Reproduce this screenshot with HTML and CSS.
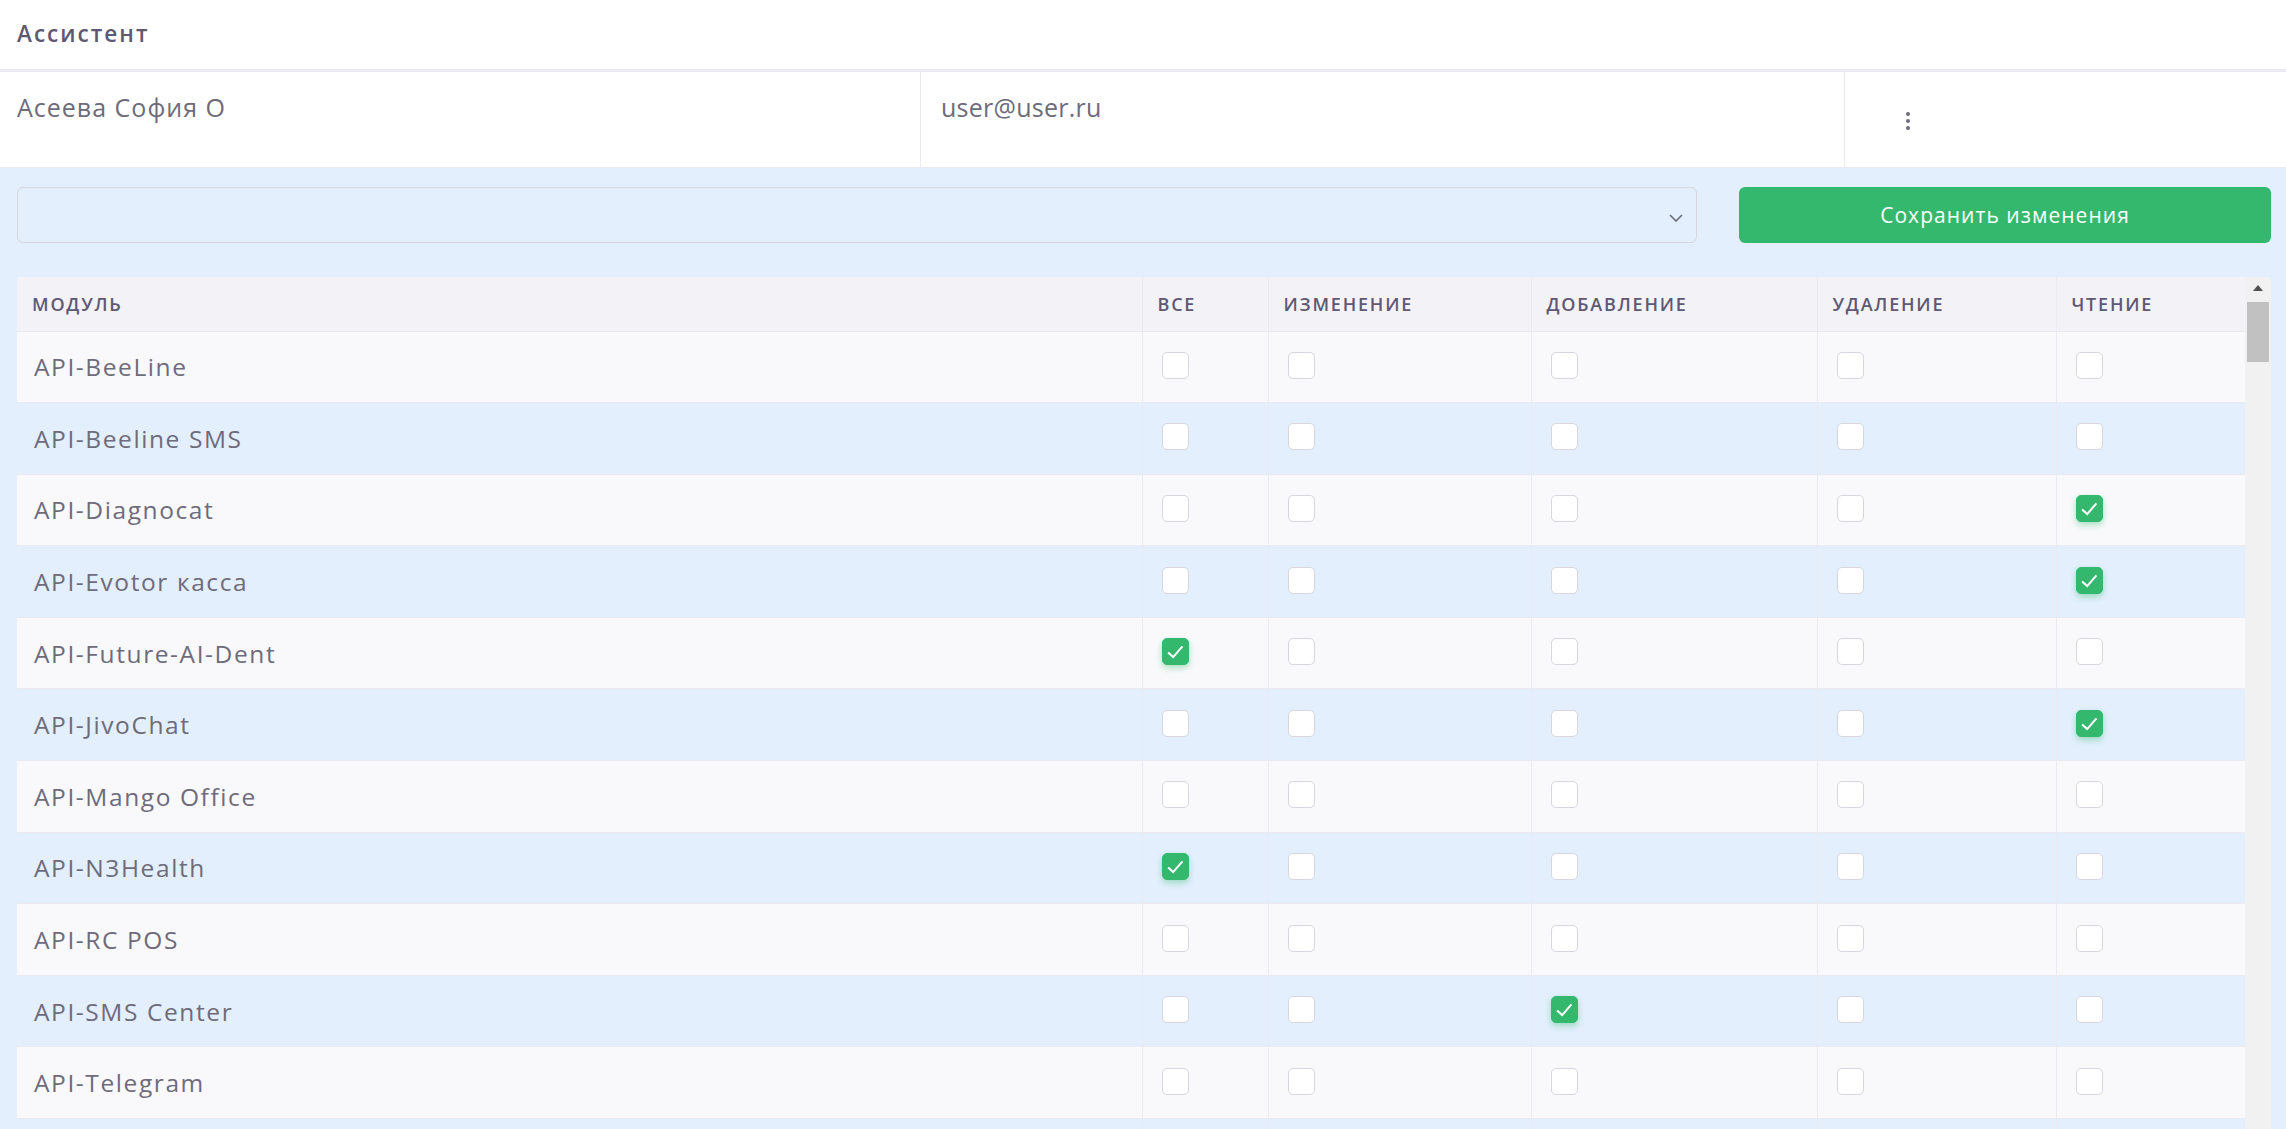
FILE: index.html
```html
<!DOCTYPE html>
<html lang="ru">
<head>
<meta charset="utf-8">
<title>Ассистент</title>
<link rel="stylesheet" href="styles.css">
</head>
<body>
<div class="title-bar"><h4 class="title">Ассистент</h4></div>
<div class="user-row">
  <div class="user-cell name-cell">Асеева София О</div>
  <div class="user-cell email-cell">user@user.ru</div>
  <div class="user-cell actions-cell">
    <svg class="kebab" width="4" height="18" viewBox="0 0 4 18"><circle cx="2" cy="2" r="2"/><circle cx="2" cy="9" r="2"/><circle cx="2" cy="16" r="2"/></svg>
  </div>
</div>
<div class="content">
  <div class="toolbar">
    <div class="select">
      <svg class="chevron" width="14" height="8" viewBox="0 0 14 8"><polyline points="1,1 7,7 13,1"/></svg>
    </div>
    <button class="btn-save">Сохранить изменения</button>
  </div>
  <div class="table-wrap">
    <div class="table-area">
      <table class="perm-table">
        <colgroup>
          <col class="c-module"><col class="c-all"><col class="c-edit"><col class="c-add"><col class="c-del"><col class="c-read">
        </colgroup>
        <thead>
          <tr><th>Модуль</th><th>Все</th><th>Изменение</th><th>Добавление</th><th>Удаление</th><th>Чтение</th></tr>
        </thead>
        <tbody>
          <tr><td class="module">API-BeeLine</td><td><span class="cb"></span></td><td><span class="cb"></span></td><td><span class="cb"></span></td><td><span class="cb"></span></td><td><span class="cb"></span></td></tr>
          <tr><td class="module">API-Beeline SMS</td><td><span class="cb"></span></td><td><span class="cb"></span></td><td><span class="cb"></span></td><td><span class="cb"></span></td><td><span class="cb"></span></td></tr>
          <tr><td class="module">API-Diagnocat</td><td><span class="cb"></span></td><td><span class="cb"></span></td><td><span class="cb"></span></td><td><span class="cb"></span></td><td><span class="cb checked"><svg viewBox="0 0 27 27"><path d="M5.5 14.5 L11 19.5 L21 8"/></svg></span></td></tr>
          <tr><td class="module">API-Evotor касса</td><td><span class="cb"></span></td><td><span class="cb"></span></td><td><span class="cb"></span></td><td><span class="cb"></span></td><td><span class="cb checked"><svg viewBox="0 0 27 27"><path d="M5.5 14.5 L11 19.5 L21 8"/></svg></span></td></tr>
          <tr><td class="module">API-Future-AI-Dent</td><td><span class="cb checked"><svg viewBox="0 0 27 27"><path d="M5.5 14.5 L11 19.5 L21 8"/></svg></span></td><td><span class="cb"></span></td><td><span class="cb"></span></td><td><span class="cb"></span></td><td><span class="cb"></span></td></tr>
          <tr><td class="module">API-JivoChat</td><td><span class="cb"></span></td><td><span class="cb"></span></td><td><span class="cb"></span></td><td><span class="cb"></span></td><td><span class="cb checked"><svg viewBox="0 0 27 27"><path d="M5.5 14.5 L11 19.5 L21 8"/></svg></span></td></tr>
          <tr><td class="module">API-Mango Office</td><td><span class="cb"></span></td><td><span class="cb"></span></td><td><span class="cb"></span></td><td><span class="cb"></span></td><td><span class="cb"></span></td></tr>
          <tr><td class="module">API-N3Health</td><td><span class="cb checked"><svg viewBox="0 0 27 27"><path d="M5.5 14.5 L11 19.5 L21 8"/></svg></span></td><td><span class="cb"></span></td><td><span class="cb"></span></td><td><span class="cb"></span></td><td><span class="cb"></span></td></tr>
          <tr><td class="module">API-RC POS</td><td><span class="cb"></span></td><td><span class="cb"></span></td><td><span class="cb"></span></td><td><span class="cb"></span></td><td><span class="cb"></span></td></tr>
          <tr><td class="module">API-SMS Center</td><td><span class="cb"></span></td><td><span class="cb"></span></td><td><span class="cb checked"><svg viewBox="0 0 27 27"><path d="M5.5 14.5 L11 19.5 L21 8"/></svg></span></td><td><span class="cb"></span></td><td><span class="cb"></span></td></tr>
          <tr><td class="module">API-Telegram</td><td><span class="cb"></span></td><td><span class="cb"></span></td><td><span class="cb"></span></td><td><span class="cb"></span></td><td><span class="cb"></span></td></tr>
          <tr class="row-peek"><td></td><td></td><td></td><td></td><td></td><td></td></tr>
        </tbody>
      </table>
    </div>
    <div class="scrollbar">
      <span class="sb-arrow"><svg width="10" height="6" viewBox="0 0 10 6"><polygon points="0,6 5,0 10,6"/></svg></span>
      <span class="sb-thumb"></span>
    </div>
  </div>
</div>
</body>
</html>
```
FILE: styles.css
```css
* { box-sizing: border-box; }

html, body {
  margin: 0;
  height: 100%;
}

body {
  background: #e3effd;
  font-family: "Open Sans", "Noto Sans", sans-serif;
  color: #6e6b7b;
  overflow: hidden;
  display: flex;
  flex-direction: column;
}

.title-bar {
  background: #fff;
  height: 72px;
  flex: none;
  border-bottom: 3px solid #ebe9f1;
  padding: 0 17px;
  display: flex;
  align-items: center;
}

.title {
  margin: 0;
  font-size: 22.5px;
  font-weight: 600;
  color: #5e5873;
  letter-spacing: 0.09em;
  line-height: 1;
}

.user-row {
  flex: none;
  display: grid;
  grid-template-columns: 921px 924px 1fr;
  height: 96px;
  background: #fff;
  border-bottom: 1px solid #ebe9f1;
}

.user-cell {
  padding: 18px 18px 0;
  font-size: 25px;
  line-height: 34px;
  letter-spacing: 0.04em;
  border-right: 1px solid #ebe9f1;
}

.name-cell { padding-left: 17px; }
.email-cell { padding-left: 20px; letter-spacing: 0.01em; }

.actions-cell {
  border-right: 0;
  display: flex;
  align-items: center;
  padding: 3px 0 0 61px;
}

.kebab { fill: #6e6b7b; }

.content {
  flex: 1;
  min-height: 0;
  display: flex;
  flex-direction: column;
  padding: 19px 15px 0 17px;
}

.toolbar {
  display: flex;
  gap: 42px;
  height: 56px;
  flex: none;
}

.select {
  flex: 1;
  border: 1px solid #d8d6de;
  border-radius: 6px;
  display: flex;
  align-items: center;
  justify-content: flex-end;
  padding: 5px 13px 0 0;
}

.chevron {
  fill: none;
  stroke: #6e6b7b;
  stroke-width: 1.6;
}

.btn-save {
  width: 532px;
  border: 0;
  border-radius: 6px;
  background: #34b86e;
  color: #fff;
  font-family: inherit;
  font-size: 21px;
  letter-spacing: 0.05em;
}

.table-wrap {
  margin-top: 34px;
  flex: 1;
  min-height: 0;
  display: flex;
  overflow: hidden;
}

.table-area {
  width: 2228px;
  flex: none;
}

.perm-table {
  width: 2228px;
  border-collapse: collapse;
  table-layout: fixed;
}

.c-module { width: 1125px; }
.c-all { width: 126px; }
.c-edit { width: 263px; }
.c-add { width: 286px; }
.c-del { width: 239px; }
.c-read { width: 189px; }

.perm-table th {
  height: 54px;
  background: #f3f2f7;
  text-align: left;
  font-size: 18px;
  font-weight: 600;
  letter-spacing: 0.1em;
  text-transform: uppercase;
  color: #5e5873;
  padding: 0 15px;
  border-left: 1px solid #ebe9f1;
  border-bottom: 1px solid #ebe9f1;
}

.perm-table td {
  height: 71.6px;
  padding: 0 19px;
  border-left: 1px solid #ebe9f1;
  border-top: 1px solid #ebe9f1;
  vertical-align: middle;
}

.perm-table th:first-child,
.perm-table td:first-child { border-left: 0; }

.perm-table tbody tr:nth-child(odd) td { background: #f9f9fb; }

.perm-table td.module {
  padding-left: 17px;
  font-size: 24.5px;
  letter-spacing: 0.065em;
}

.cb {
  display: block;
  width: 27px;
  height: 27px;
  margin-top: -3px;
  border: 1px solid #d8d6de;
  border-radius: 5px;
  background: #fff;
}

.cb.checked {
  background: #34b86e;
  border-color: #34b86e;
  box-shadow: 0 3px 6px 0 rgba(52, 184, 110, 0.4);
}

.cb svg {
  display: block;
  width: 25px;
  height: 25px;
  fill: none;
  stroke: #fff;
  stroke-width: 2.2;
}

.scrollbar {
  width: 26px;
  flex: none;
  background: #f1f1f1;
  display: flex;
  flex-direction: column;
  align-items: center;
}

.sb-arrow {
  height: 25px;
  display: flex;
  align-items: center;
  justify-content: center;
  fill: #505050;
  padding-bottom: 4px;
}

.sb-thumb {
  width: 22px;
  height: 60px;
  background: #c1c1c1;
}
```
